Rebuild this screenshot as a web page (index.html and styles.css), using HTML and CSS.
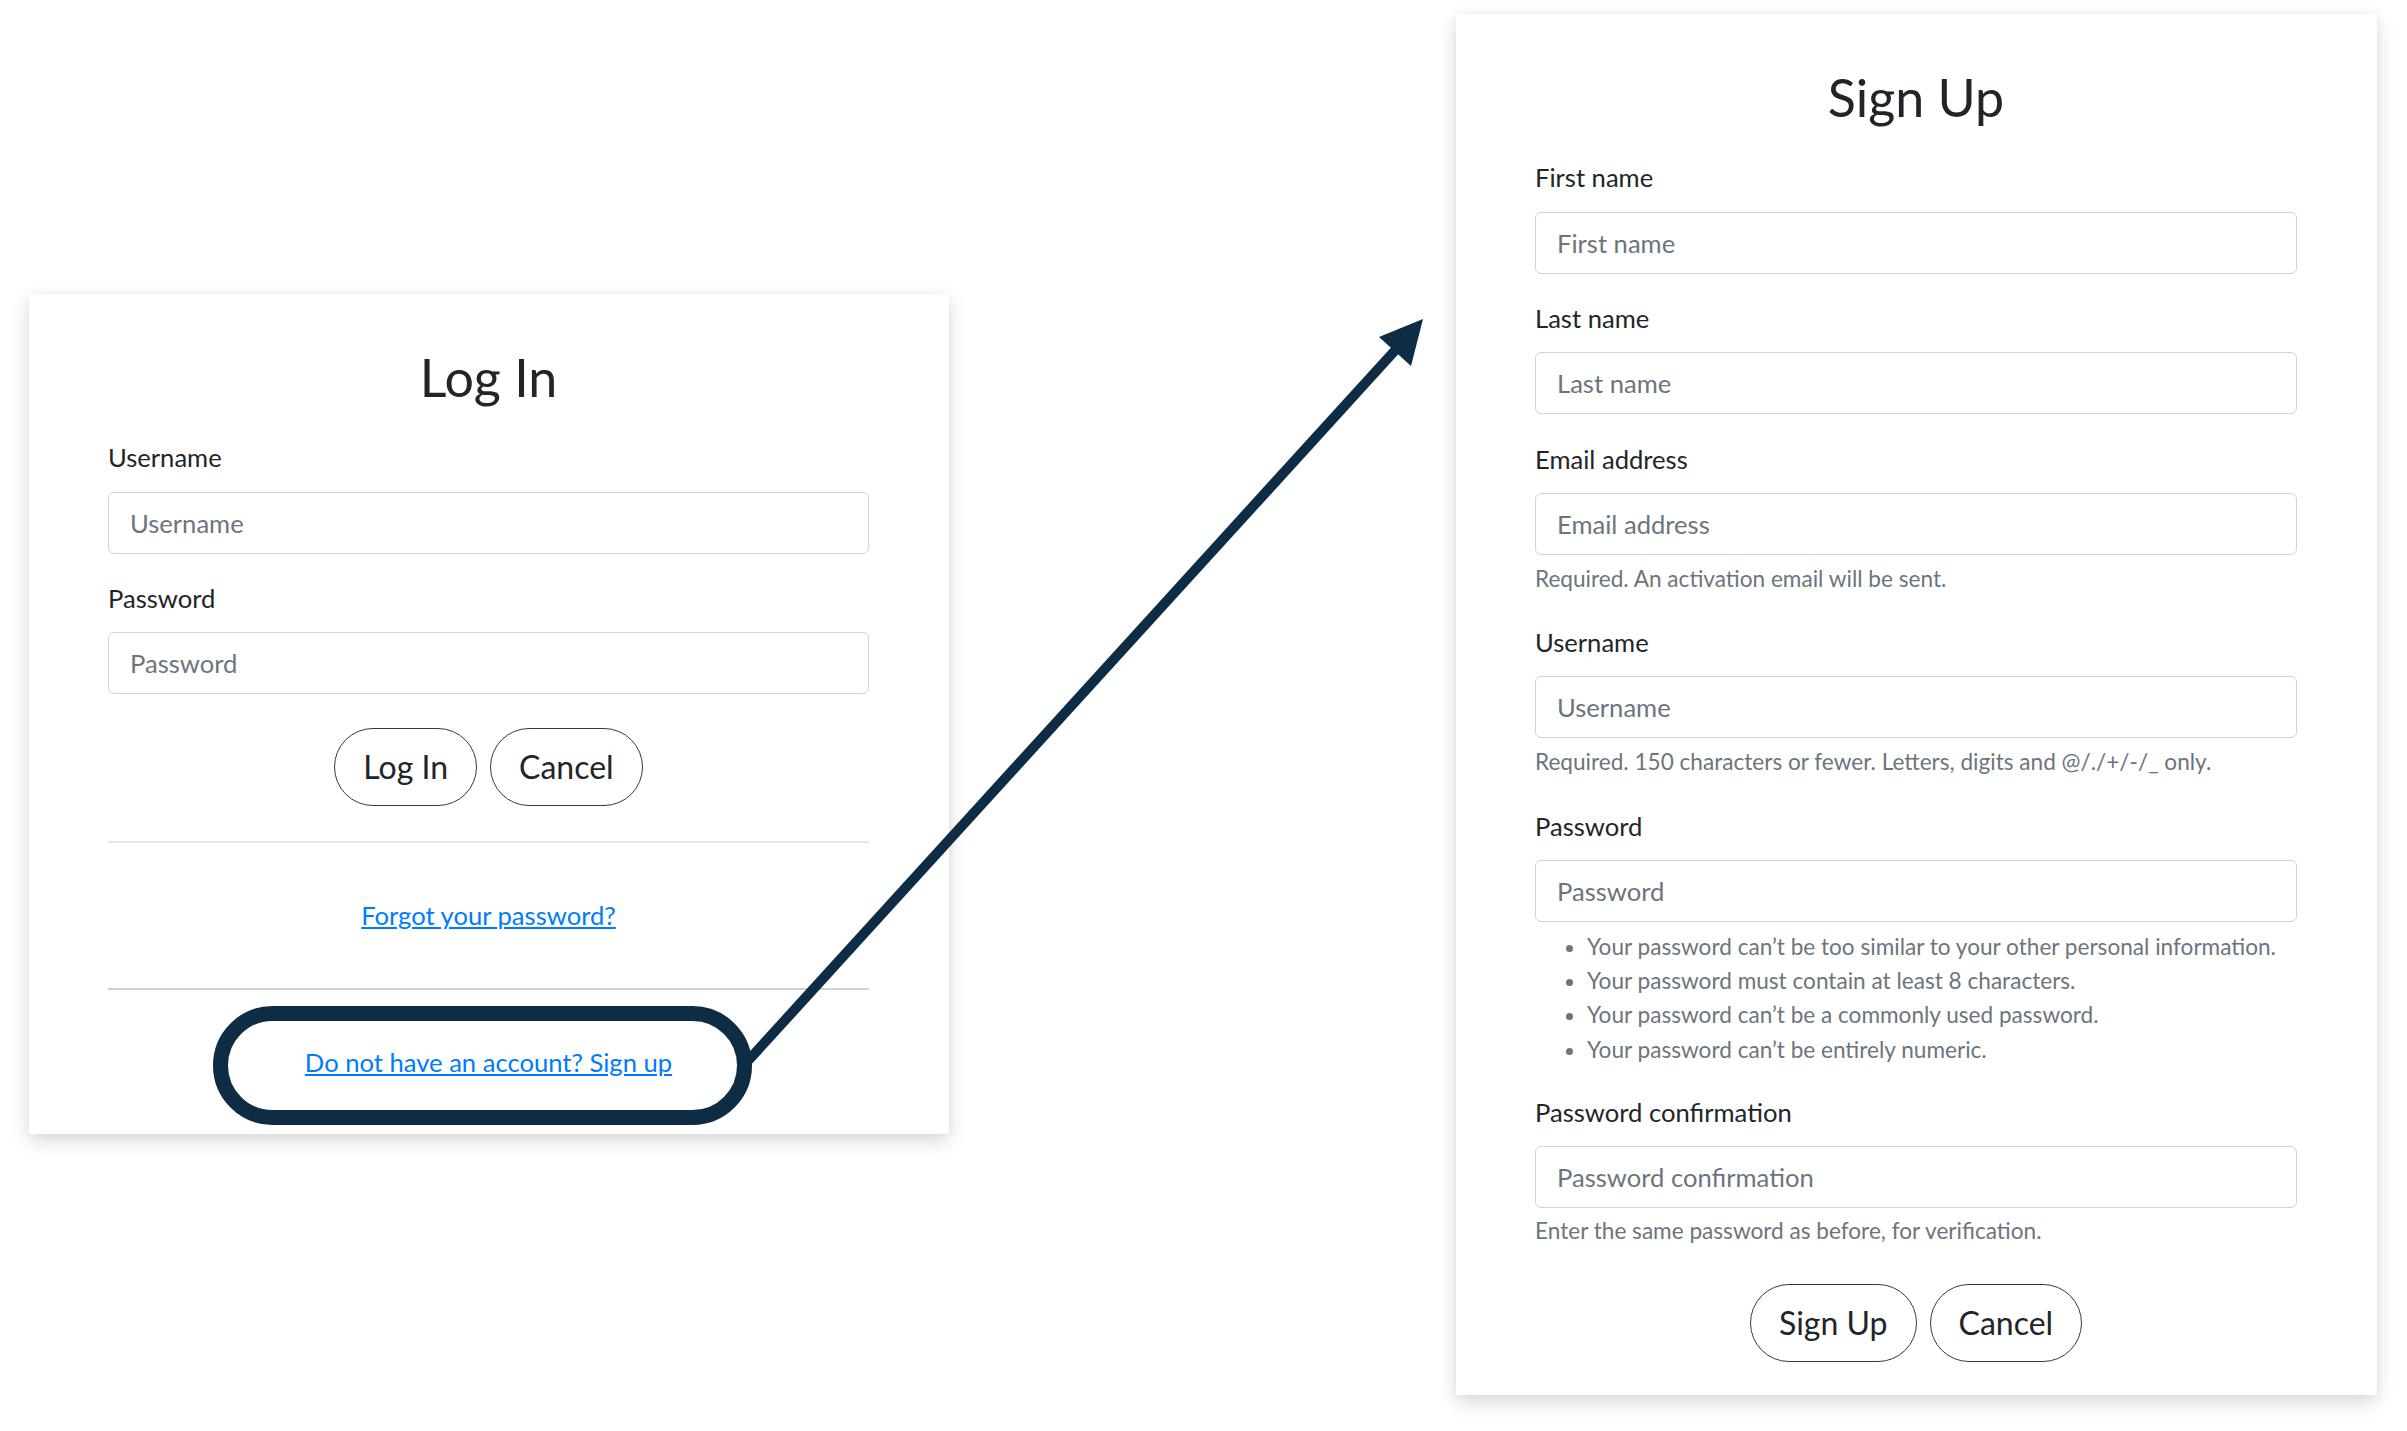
FILE: index.html
```html
<!DOCTYPE html>
<html lang="en">
<head>
    <meta charset="UTF-8">
    <meta name="viewport" content="width=device-width, initial-scale=1.0">
    <title>Log In - Sign Up</title>
    <link rel="stylesheet" href="styles.css">
</head>
<body>
    <main class="stage">
        <section class="card card-login">
            <h2 class="card-title">Log In</h2>
            <form>
                <div class="form-group">
                    <label for="login-username">Username</label>
                    <input type="text" id="login-username" class="form-control" placeholder="Username">
                </div>
                <div class="form-group">
                    <label for="login-password">Password</label>
                    <input type="password" id="login-password" class="form-control" placeholder="Password">
                </div>
                <div class="actions">
                    <button type="submit" class="btn">Log In</button>
                    <button type="button" class="btn">Cancel</button>
                </div>
            </form>
            <hr>
            <p class="alt-link"><a href="#">Forgot your password?</a></p>
            <hr class="hr-dark">
            <p class="alt-link"><a href="#">Do not have an account? Sign up</a></p>
        </section>

        <section class="card card-signup">
            <h2 class="card-title">Sign Up</h2>
            <form>
                <div class="form-group">
                    <label for="first-name">First name</label>
                    <input type="text" id="first-name" class="form-control" placeholder="First name">
                </div>
                <div class="form-group">
                    <label for="last-name">Last name</label>
                    <input type="text" id="last-name" class="form-control" placeholder="Last name">
                </div>
                <div class="form-group">
                    <label for="email">Email address</label>
                    <input type="email" id="email" class="form-control" placeholder="Email address">
                    <small class="help">Required. An activation email will be sent.</small>
                </div>
                <div class="form-group">
                    <label for="username">Username</label>
                    <input type="text" id="username" class="form-control" placeholder="Username">
                    <small class="help">Required. 150 characters or fewer. Letters, digits and @/./+/-/_ only.</small>
                </div>
                <div class="form-group">
                    <label for="password1">Password</label>
                    <input type="password" id="password1" class="form-control" placeholder="Password">
                    <ul class="help-list">
                        <li>Your password can’t be too similar to your other personal information.</li>
                        <li>Your password must contain at least 8 characters.</li>
                        <li>Your password can’t be a commonly used password.</li>
                        <li>Your password can’t be entirely numeric.</li>
                    </ul>
                </div>
                <div class="form-group">
                    <label for="password2">Password confirmation</label>
                    <input type="password" id="password2" class="form-control" placeholder="Password confirmation">
                    <small class="help">Enter the same password as before, for verification.</small>
                </div>
                <div class="actions">
                    <button type="submit" class="btn">Sign Up</button>
                    <button type="button" class="btn">Cancel</button>
                </div>
            </form>
        </section>
    </main>

    <!-- callout: from the sign up link to the sign up form -->
    <svg class="callout" width="2407" height="1431" viewBox="0 0 2407 1431">
        <rect x="220.5" y="1013.5" width="524" height="104" rx="52" ry="52" fill="none" stroke="#0e2d45" stroke-width="15"/>
        <line x1="746" y1="1063" x2="1400" y2="345" stroke="#0e2d45" stroke-width="10"/>
        <polygon points="1423,319 1379,337 1411,366" fill="#0e2d45"/>
    </svg>
</body>
</html>
```

FILE: styles.css
```css
* {
    margin: 0;
    padding: 0;
    box-sizing: border-box;
}

body {
    font-family: Lato, "Noto Sans", sans-serif;
    font-size: 25.6px;
    line-height: 1.5;
    color: #212529;
    background-color: #ffffff;
    width: 2407px;
    height: 1431px;
    overflow: hidden;
    position: relative;
}

.stage {
    display: flex;
    align-items: flex-start;
    gap: 507px;
    padding: 14px 0 0 29px;
}

.card {
    background-color: #ffffff;
    padding: 52px 80px 0 79px;
    box-shadow: 0 7px 18px rgba(0, 0, 0, 0.15), 0 0 10px rgba(0, 0, 0, 0.04);
}

.card-login {
    width: 920px;
    margin-top: 280px;
}

.card-signup {
    width: 921px;
    padding-bottom: 33px;
}

.card-title {
    font-size: 52px;
    font-weight: 400;
    line-height: 1.2;
    text-align: center;
    margin-bottom: 30px;
}

.form-group {
    margin-bottom: 25.6px;
}

label {
    display: block;
    line-height: 38.4px;
    margin-bottom: 14.8px;
}

.form-control {
    display: block;
    width: 100%;
    height: 62px;
    padding: 0 21px;
    font-family: inherit;
    font-size: 25.6px;
    color: #495057;
    border: 1px solid #ced4da;
    border-radius: 6px;
    background-color: #ffffff;
}

.form-control::placeholder {
    color: #6c757d;
    opacity: 1;
}

.help {
    display: block;
    margin-top: 4.5px;
    font-size: 22.6px;
    line-height: 38px;
    color: #6c757d;
}

.help-list {
    margin-top: 8px;
    padding-left: 52px;
    font-size: 22.6px;
    line-height: 34.3px;
    color: #6c757d;
}

/* margin collapses with the form-group margin above */
.actions {
    display: flex;
    justify-content: center;
    gap: 13px;
    margin-top: 34px;
}

.card-login .actions {
    margin-bottom: 35px;
}

.btn {
    font-family: inherit;
    font-size: 32px;
    line-height: 48px;
    padding: 14px 28px;
    color: #212529;
    background-color: transparent;
    border: 1px solid #343a40;
    border-radius: 50px;
    cursor: pointer;
}

hr {
    border: none;
    border-top: 2px solid #e3e6ea;
    height: 0;
}

.hr-dark {
    border-top-color: #cfd1d3;
}

.alt-link {
    text-align: center;
    line-height: 38.4px;
    padding: 53px 0;
}

.alt-link a {
    color: #007bff;
    text-decoration: underline;
}

.callout {
    position: absolute;
    top: 0;
    left: 0;
    pointer-events: none;
}
```
